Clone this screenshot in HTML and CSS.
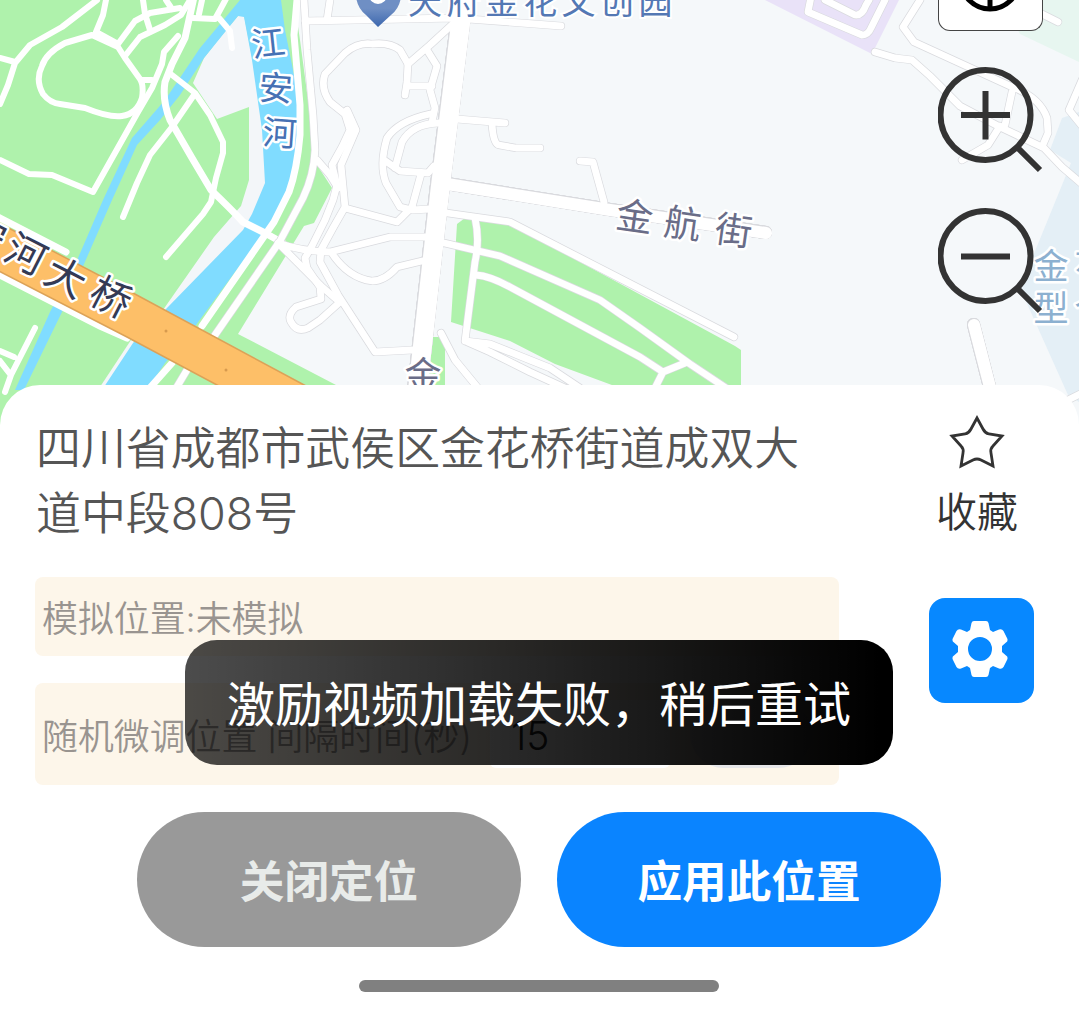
FILE: index.html
```html
<!DOCTYPE html>
<html lang="zh-CN">
<head>
    <meta charset="UTF-8">
    <meta name="viewport" content="width=device-width, initial-scale=1.0">
    <title>虚拟定位</title>
    <link rel="stylesheet" href="styles.css">
</head>
<body>
    <div class="map">
        <svg class="map-canvas" viewBox="0 0 1079 430" width="1079" height="430">
            <defs>
                <linearGradient id="pinFill" x1="0" y1="0" x2="0" y2="1">
                    <stop offset="0.4" stop-color="#6f8fc4"/>
                    <stop offset="1" stop-color="#3c67ae"/>
                </linearGradient>
                <g id="streets">
                    <path d="M305 21 L455 18 L561 26 M330 0 L327 20"/>
                    <path d="M455 22 L430 45 L408 64 L400 50 Q390 42 372 44 Q358 42 345 53 L325 74 Q320 88 330 102 L345 114 L350 130 L342 147 L332 165 L337 185 L333 200 L325 220 L312 246 L305 258 L307 268 L320 287 L321 299 L296 307 Q287 315 291 322 Q297 333 308 328 L320 320 L340 302"/>
                    <path d="M347 110 L356 130 L341 165 L345 207 L333 228 L321 250 L320 262 L338 295 L375 352 L412 350"/>
                    <path d="M408 63 L407 82 L405 95 M407 86 H432 M427 50 L437 66 L430 90 L435 108 L432 122"/>
                    <path d="M430 114 Q398 121 387 138 Q379 165 386 183 L400 207 L412 210 L430 209 M438 123 Q412 124 402 142 L395 168 M384 160 L400 171 L428 173 L434 166 M421 174 L412 207 L397 222 L345 208"/>
                    <path d="M457 119 L505 123 M492 123 Q493 144 499 145 L516 148 H540"/>
                    <path d="M580 161 L593 162 L604 202"/>
                    <path d="M440 212 L510 222 L734 337 M440 242 L500 256 L600 300 L640 328 L690 364 L726 388 M476 275 Q490 276 510 287 L640 357 L663 372 L685 363 M663 372 L655 388"/>
                    <path d="M475 218 Q480 240 475 262 L465 341 L490 352 L530 372 L565 388 M465 341 L490 344 L520 356 L550 368 L580 388 M441 333 L455 360 L478 388"/>
                    <path d="M278 243 Q300 251 330 252 L390 237 L426 237 M331 252 Q348 278 372 281 Q385 281 397 267 L422 261 M280 245 L321 286 L336 299"/>
                    <path d="M304 0 L307 50 L313 115 L315 150 Q314 175 303 198 L280 241 L215 335 M190 365 L175 390 M317 160 L330 175 L338 188"/>
                    <path d="M920 0 L903 27 L914 42 L1010 86 Q1040 97 1047 118 L1048 133 L1042 147 M875 52 L895 58 L912 60 L930 76 L960 106 L1000 127 L1044 148 L1062 167 L1082 184 M1012 92 L1005 125 M1000 126 L988 145 L962 160 M1082 80 L1069 110 L1082 126 M1030 8 L1058 22"/>
                    <path d="M811 -3 L808 12 L862 35 Q868 35 871 28 L885 0 M825 0 L855 15 Q862 16 866 5 L869 0 M1060 404 L1082 393"/>
                </g>
                <g id="avenues">
                    <path class="wide" d="M462 -10 L461 20 L440 190 L417 395"/>
                    <path class="mid" d="M447 184 L610 210 L766 233 M974 325 L992 395"/>
                </g>
            </defs>

            <!-- parks and blocks -->
            <path class="park" d="M0 0 H294 L300 40 L308 100 L312 145 L319 168 L332 188 L314 223 L304 226 L238 334 L336 385 L345 430 H0 Z"/>
            <path class="block" d="M243 10 L222 35 L204 58 L193 83 L217 119 L249 107 L249 180 L241 206 L214 237 L163 310 L176 318 L260 225 L268 180 L264 120 Z"/>
            <path class="block" d="M131 340 L98 390 H112 L140 345 Z"/>
            <path class="park" d="M457 224 L465 218 L510 224 L735 346 L741 350 V388 H620 L555 364 L510 341 L451 322 Z M432 337 H445 V388 H428 Z"/>
            <path class="mall" d="M765 0 L872 54 L899 0 Z"/>
            <path class="garden" d="M1002 0 L1020 34 L1079 62 V0 Z"/>
            <path class="campus" d="M1079 112 L1062 118 L1050 150 L1071 163 L1020 288 L1068 395 L1079 402 Z"/>

            <!-- water -->
            <path class="water" d="M240 0 H281 L285 30 L296 85 L299 130 L294 170 L285 196 L266 230 L196 325 L165 363 L147 390 H102 L133 343 L167 308 L243 230 L252 214 L265 183 L262 130 L252 60 L244 17 L238 16 L204 58 L180 95 L160 120 L137 145 L112 200 L84 264 L62 312 L24 390 H15 L50 312 L78 258 L103 200 L132 138 L165 100 L200 48 Z"/>

            <!-- park paths -->
            <g class="path">
                <path d="M97 0 L62 27 L30 45 L15 63 L8 85 L0 104 M0 58 L15 62"/>
                <path d="M118 47 L92 35 L65 43 Q46 53 42 66 Q35 80 43 94 Q50 103 60 104 L85 108 Q110 118 122 116 Q137 114 142 98 Q144 85 140 79 L125 58 L118 47 M106 0 L103 15 L96 32 L118 44 L135 21 L150 13 L180 8"/>
                <path d="M125 56 L140 37 L165 25 L181 15 L190 0 M143 0 L145 14 L150 30 M166 0 L172 9"/>
                <path d="M178 36 L164 52 L162 64 L152 88 L138 112 L93 192 L52 175 L29 174 L0 160 M141 80 L152 80"/>
                <path d="M172 75 L195 93 L210 115 L223 142 L223 153 L216 178 L211 202 L203 214 L166 257 M194 95 L172 127 L150 155 L137 183 L123 217"/>
                <path d="M193 18 L215 19 L220 10 L227 -3 M219 18 L230 31 L232 48 M202 0 L199 14"/>
                <path d="M35 328 L11 375 L5 392 M14 357 L0 351 M0 361 L10 374"/>
                <path class="heavy" d="M194 -3 L185 38 L172 64 L165 82 Q162 100 170 120 L192 158 L211 190 Q230 208 243 222 L265 233 L283 243"/>
                <path class="heavy" d="M297 0 L294 35 L300 105 L300 135 Q297 170 289 192 L274 222 L202 326 M172 363 L148 390"/>
            </g>

            <use href="#streets" class="casing"/>
            <use href="#avenues" class="avenue-casing"/>
            <use href="#streets" class="street"/>
            <use href="#avenues" class="avenue"/>

            <!-- bridge -->
            <path class="bridge-side" d="M0 218 L66 252 M0 275 L100 326 L127 338"/>
            <path class="bridge" d="M-3 222 L133 293 L320 393.500 L232 393 L127 337 L-3 270 Z"/>
            <circle class="bridge-dot" cx="166" cy="331" r="1.500"/>
            <circle class="bridge-dot" cx="226" cy="370" r="1.500"/>

            <!-- labels -->
            <g class="label water-label">
                <text transform="translate(268 41) rotate(-6)">江</text>
                <text transform="translate(276 86) rotate(4)">安</text>
                <text transform="translate(280 131) rotate(4)">河</text>
            </g>
            <g class="label bridge-label">
                <text transform="translate(-13 232) rotate(27)">安</text>
                <text transform="translate(27 252) rotate(27)">河</text>
                <text transform="translate(67 275) rotate(27)">大</text>
                <text transform="translate(112 295) rotate(27)">桥</text>
            </g>
            <g class="label road-label">
                <text transform="translate(635 214) rotate(8)">金</text>
                <text transform="translate(683 221) rotate(8)">航</text>
                <text transform="translate(734 228) rotate(8)">街</text>
                <text transform="translate(423 373)">金</text>
            </g>
            <g class="label campus-label">
                <text x="1051" y="263">金</text>
                <text x="1051" y="305">型</text>
                <text x="1092" y="263">花</text>
                <text x="1092" y="305">仓</text>
            </g>
            <text class="poi-label" x="408" y="14">天府金花文创园</text>
            <path fill="url(#pinFill)" d="M356 -4 Q357 8 366 15 L378 27 L391 15 Q400 8 401 -4 Z"/>
            <circle cx="378" cy="-5" r="9" fill="#fff"/>
        </svg>

        <div class="map-controls">
            <button class="locate-btn" aria-label="定位">
                <svg viewBox="0 0 103 40" width="103" height="40">
                    <circle cx="51" cy="-10" r="29"/>
                    <path d="M51 -40 V19 M22 -10 H80"/>
                </svg>
            </button>
            <button class="zoom-btn" aria-label="放大">
                <svg viewBox="0 0 106 106" width="106" height="106">
                    <circle cx="47.500" cy="48" r="45"/>
                    <path d="M23 48 H72 M47.500 24 V72.500 M79.500 80.500 L102 103"/>
                </svg>
            </button>
            <button class="zoom-btn" aria-label="缩小">
                <svg viewBox="0 0 106 106" width="106" height="106">
                    <circle cx="47.500" cy="48" r="45"/>
                    <path d="M23 48.500 H72 M79.500 80.500 L102 103"/>
                </svg>
            </button>
        </div>
    </div>

    <div class="panel">
        <div class="panel-body">
            <div class="info">
                <p class="address">四川省成都市武侯区金花桥街道成双大道中段808号</p>
                <div class="status-row">模拟位置:未模拟</div>
                <div class="status-row interval-row">
                    <span>随机微调位置 间隔时间(秒)</span>
                    <span class="interval-input">15</span>
                    <span class="switch"></span>
                </div>
            </div>
            <div class="side">
                <svg class="star" viewBox="0 0 56 54" width="56" height="54">
                    <path d="M28 3 L34 14 Q36 18 40 19 L53 21 L44 31 Q41 34 42 38 L44 51 L32 45 Q28 43 24 45 L12 51 L14 38 Q15 34 12 31 L3 21 L16 19 Q20 18 22 14 Z"/>
                </svg>
                <span class="star-text">收藏</span>
                <button class="settings-btn" aria-label="设置">
                    <svg viewBox="0 0 56 56" width="56" height="56">
                        <path fill-rule="evenodd" d="M22 0 H34 Q36 0 36.500 2 L38 9 L41 11 L47 8.500 Q50 7.500 51.500 10 L55 17 Q56.500 20 54 21.500 L50 25 V31 L54 34.500 Q56.500 36 55 39 L51.500 46 Q50 48.500 47 47.500 L41 45 L38 47 L36.500 54 Q36 56 34 56 H22 Q20 56 19.500 54 L18 47 L15 45 L9 47.500 Q6 48.500 4.500 46 L1 39 Q-0.500 36 2 34.500 L6 31 V25 L2 21.500 Q-0.500 20 1 17 L4.500 10 Q6 7.500 9 8.500 L15 11 L18 9 L19.500 2 Q20 0 22 0 Z M28 16 A12 12 0 1 0 28 40 A12 12 0 1 0 28 16 Z"/>
                    </svg>
                </button>
            </div>
        </div>
        <div class="actions">
            <button class="btn btn-close">关闭定位</button>
            <button class="btn btn-apply">应用此位置</button>
        </div>
        <div class="home-bar"></div>
    </div>

    <div class="toast">激励视频加载失败，稍后重试</div>
</body>
</html>
```

FILE: styles.css
```css
* {
    margin: 0;
    padding: 0;
    box-sizing: border-box;
}

body {
    position: relative;
    width: 1079px;
    height: 1012px;
    overflow: hidden;
    background: #fff;
    font-family: Inter, 'Noto Sans CJK SC', sans-serif;
}

button {
    border: none;
    background: none;
    font-family: inherit;
    cursor: pointer;
}

/* Map */
.map {
    position: relative;
    height: 385px;
}

.map-canvas {
    display: block;
    background: #f5f8fa;
}

.park { fill: #aff2ac; }
.block { fill: #f3f6f9; }
.mall { fill: #e9e2f8; }
.garden { fill: #e7f6f0; }
.campus { fill: #e4eff6; }
.water { fill: #80dcff; }

.path,
.casing,
.avenue-casing,
.street,
.avenue {
    fill: none;
    stroke: #fff;
    stroke-width: 6px;
    stroke-linecap: round;
    stroke-linejoin: round;
}

.heavy {
    stroke-width: 7px;
}

.casing {
    stroke: #d9dade;
    stroke-width: 8.2px;
}

.street {
    stroke-width: 6.8px;
}

.wide { stroke-width: 19px; }
.mid { stroke-width: 12px; }

.avenue-casing {
    stroke: #d9dade;
    filter: drop-shadow(0.7px 0 0 #d9dade) drop-shadow(-0.7px 0 0 #d9dade) drop-shadow(0 0.7px 0 #d9dade) drop-shadow(0 -0.7px 0 #d9dade);
}

.bridge {
    fill: #fdbf68;
    stroke: #dca258;
    stroke-width: 1.5px;
}

.bridge-side {
    fill: none;
    stroke: #fff;
    stroke-width: 7px;
    stroke-linecap: round;
}

.bridge-dot {
    fill: #d79a4e;
}

.label text {
    font-family: 'Noto Sans CJK SC', sans-serif;
    text-anchor: middle;
    dominant-baseline: central;
    paint-order: stroke;
    stroke: #fff;
    stroke-width: 5px;
    stroke-linejoin: round;
}

.water-label {
    fill: #4671b4;
    font-size: 34px;
}

.bridge-label {
    fill: #343a55;
    font-size: 40px;
}

.road-label {
    fill: #6a6d88;
    font-size: 37px;
}

.campus-label {
    fill: #8cb0d0;
    font-size: 35px;
}

.poi-label {
    fill: #5478b4;
    font-family: 'Noto Sans CJK SC', sans-serif;
    font-size: 34px;
    letter-spacing: 4.4px;
    paint-order: stroke;
    stroke: #fff;
    stroke-width: 4px;
}

.map-controls {
    position: absolute;
    top: -10px;
    left: 938px;
    display: flex;
    flex-direction: column;
    gap: 35px;
}

.map-controls svg {
    display: block;
    fill: none;
    stroke: #333;
    stroke-width: 6px;
}

.locate-btn {
    width: 105px;
    height: 41px;
    margin-bottom: 1px;
    overflow: hidden;
    background: #fff;
    border: 1.5px solid #444;
    border-top: none;
    border-radius: 0 0 12px 12px;
}

.map-controls .locate-btn svg {
    stroke: #000;
    stroke-width: 5px;
}

.zoom-btn {
    width: 106px;
    height: 106px;
}

/* Bottom panel */
.panel {
    position: relative;
    height: 627px;
    padding: 30px 45px 0 35px;
    background: #fff;
    border-radius: 40px 40px 0 0;
}

.panel-body {
    display: flex;
    justify-content: space-between;
}

.info {
    width: 804px;
}

.address {
    height: 130px;
    margin-bottom: 32px;
    padding: 2px 0 0 1px;
    color: #555;
    font-size: 44.9px;
    font-weight: 350;
    line-height: 65px;
}

.status-row {
    display: flex;
    align-items: center;
    height: 79px;
    margin-bottom: 27px;
    padding: 0 7px 2px;
    background: #fdf6ea;
    border-radius: 8px;
    color: #999490;
    font-size: 35.9px;
    font-weight: 350;
    white-space: nowrap;
}

.interval-row {
    height: 102px;
    padding-bottom: 0;
    margin-bottom: 27px;
}

.interval-row > span:first-child {
    width: 448px;
}

.interval-input {
    width: 180px;
    height: 68px;
    padding-left: 21px;
    background: #fff;
    border-radius: 6px;
    color: #222;
    font-size: 39px;
    line-height: 72px;
}

.switch {
    width: 122px;
    height: 68px;
    margin-left: 20px;
    background: #e6e6e8;
    border-radius: 34px;
}

.side {
    display: flex;
    flex-direction: column;
    align-items: center;
    width: 105px;
}

.star {
    margin-left: -9px;
    fill: none;
    stroke: #333;
    stroke-width: 2.8px;
}

.star-text {
    height: 60px;
    margin: 13px 9px 56px 0;
    color: #333;
    font-size: 41px;
    font-weight: 350;
    line-height: 60px;
}

.settings-btn {
    display: flex;
    align-items: center;
    justify-content: center;
    width: 105px;
    height: 105px;
    background: #0788ff;
    border-radius: 16px;
}

.settings-btn svg {
    margin: 0 3px 3px 0;
    fill: #fff;
}

.actions {
    display: flex;
    gap: 36px;
    padding-left: 102px;
}

.btn {
    width: 384px;
    height: 135px;
    padding-bottom: 3px;
    border-radius: 68px;
    color: #fff;
    font-size: 44.6px;
    font-weight: 700;
}

.btn-close {
    background: #999;
    color: #e8ebe9;
}

.btn-apply {
    background: #0a84ff;
}

.home-bar {
    width: 360px;
    height: 12px;
    margin: 33px 0 0 324px;
    background: #808080;
    border-radius: 6px;
}

/* Toast */
.toast {
    position: absolute;
    top: 640px;
    left: 185px;
    width: 708px;
    height: 125px;
    padding-top: 2px;
    background: linear-gradient(90deg, rgba(0, 0, 0, 0.7), #000 98%);
    border-radius: 32px;
    color: #fff;
    font-size: 48px;
    line-height: 125px;
    text-align: center;
    white-space: nowrap;
}
```
